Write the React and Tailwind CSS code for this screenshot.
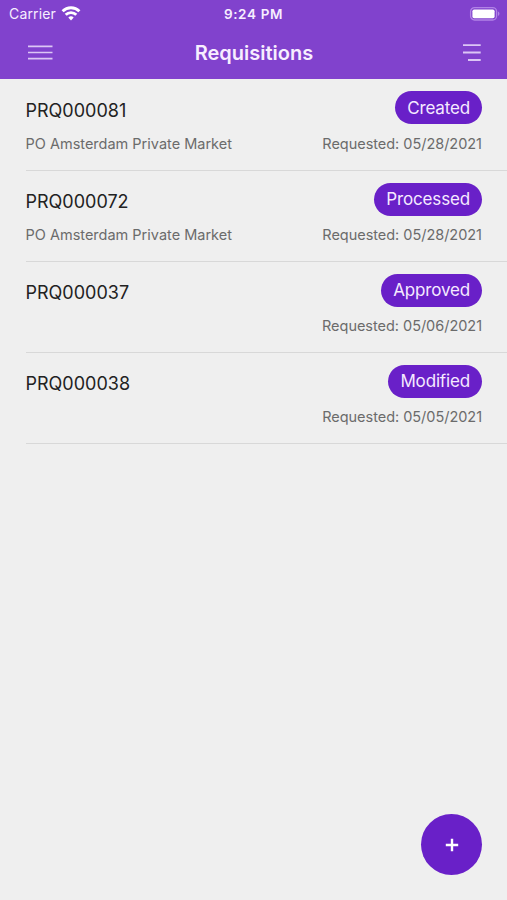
const requisitions = [
  { id: "PRQ000081", company: "PO Amsterdam Private Market", status: "Created", date: "05/28/2021" },
  { id: "PRQ000072", company: "PO Amsterdam Private Market", status: "Processed", date: "05/28/2021" },
  { id: "PRQ000037", company: "", status: "Approved", date: "05/06/2021" },
  { id: "PRQ000038", company: "", status: "Modified", date: "05/05/2021" },
]

function WifiIcon() {
  return (
    <svg width="20" height="16" viewBox="0 0 20 16" fill="none" stroke="#fff" strokeWidth="2.9">
      <path d="M1.6 5.2a12 12 0 0 1 16.8 0" />
      <path d="M4.7 8.8a7.6 7.6 0 0 1 10.6 0" />
      <path d="M10 14.4l-2.7-2.8a3.8 3.8 0 0 1 5.4 0z" fill="#fff" stroke="none" />
    </svg>
  )
}

function BatteryIcon() {
  return (
    <svg width="32" height="16" viewBox="0 0 32 16" fill="none">
      <rect x="1.6" y="1.6" width="26" height="12.4" rx="4" stroke="#b183e6" strokeWidth="1.3" />
      <rect x="3.4" y="3.4" width="22.2" height="8.8" rx="1.8" fill="#fff" />
      <path d="M29 5.6v4.4a2.4 2.4 0 0 0 0-4.4z" fill="#b183e6" />
    </svg>
  )
}

function StatusBar() {
  return (
    <div className="grid h-[27px] grid-cols-3 items-center">
      <div className="flex items-center gap-[5px] pl-[9px]">
        <span className="text-[14px] leading-none tracking-[0.15px]">Carrier</span>
        <WifiIcon />
      </div>
      <span className="pt-[2px] text-center text-[13.5px] leading-none font-semibold tracking-[0.65px]">9:24 PM</span>
      <div className="flex justify-end pr-[6px]">
        <BatteryIcon />
      </div>
    </div>
  )
}

function NavBar() {
  return (
    <div className="grid h-[52px] grid-cols-[1fr_auto_1fr] items-center pr-[26px] pl-[28px]">
      <button aria-label="Menu">
        <svg width="25" height="18" viewBox="0 0 25 18" stroke="#dcc6f5" strokeWidth="1.7">
          <path d="M0 2.4h24.5M0 8.5h24.5M0 14.6h24.5" />
        </svg>
      </button>
      <h1 className="-ml-px text-[20px] leading-none font-semibold">Requisitions</h1>
      <button aria-label="Filter" className="justify-self-end">
        <svg width="18" height="20" viewBox="0 0 18 20" stroke="#dcc6f5" strokeWidth="1.8">
          <path d="M0 2.1h17.7M0 9.5h17.7M5 17h12.7" />
        </svg>
      </button>
    </div>
  )
}

function RequisitionRow({ item }) {
  return (
    <li className="ml-[25.5px] flex h-[91.25px] justify-between border-b border-[#d8d8d8] pt-3 pr-[25px]">
      <div className="flex flex-col">
        <span className="flex h-[37.4px] items-center text-[18px] text-[#222]">{item.id}</span>
        <span className="mt-[4.8px] text-[14.5px] leading-5 text-[#6b6b6b]">{item.company}</span>
      </div>
      <div className="flex flex-col items-end">
        <span className="flex h-[33px] items-center rounded-full bg-[#6920c8] px-3 pt-px text-[17px] tracking-[-0.15px] text-[#f5eaff]">
          {item.status}
        </span>
        <span className="mt-[9.2px] text-[14.5px] leading-5 tracking-[-0.03px] text-[#6b6b6b]">Requested: {item.date}</span>
      </div>
    </li>
  )
}

export default function App() {
  return (
    <div className="relative h-[900px] w-full overflow-hidden bg-[#efefef] font-['Inter',sans-serif]">
      <header className="h-[79.4px] bg-[#8142cd] text-[#f7eeff]">
        <StatusBar />
        <NavBar />
      </header>

      <ul>
        {requisitions.map((item) => (
          <RequisitionRow key={item.id} item={item} />
        ))}
      </ul>

      {/* Floating add button */}
      <button
        aria-label="Add requisition"
        className="absolute right-[25px] bottom-[25px] flex size-[61px] items-center justify-center rounded-full bg-[#6920c8]"
      >
        <svg width="14" height="14" viewBox="0 0 14 14" stroke="#fff" strokeWidth="2.4">
          <path d="M7 0.8v12.4M0.8 7h12.4" />
        </svg>
      </button>
    </div>
  )
}
